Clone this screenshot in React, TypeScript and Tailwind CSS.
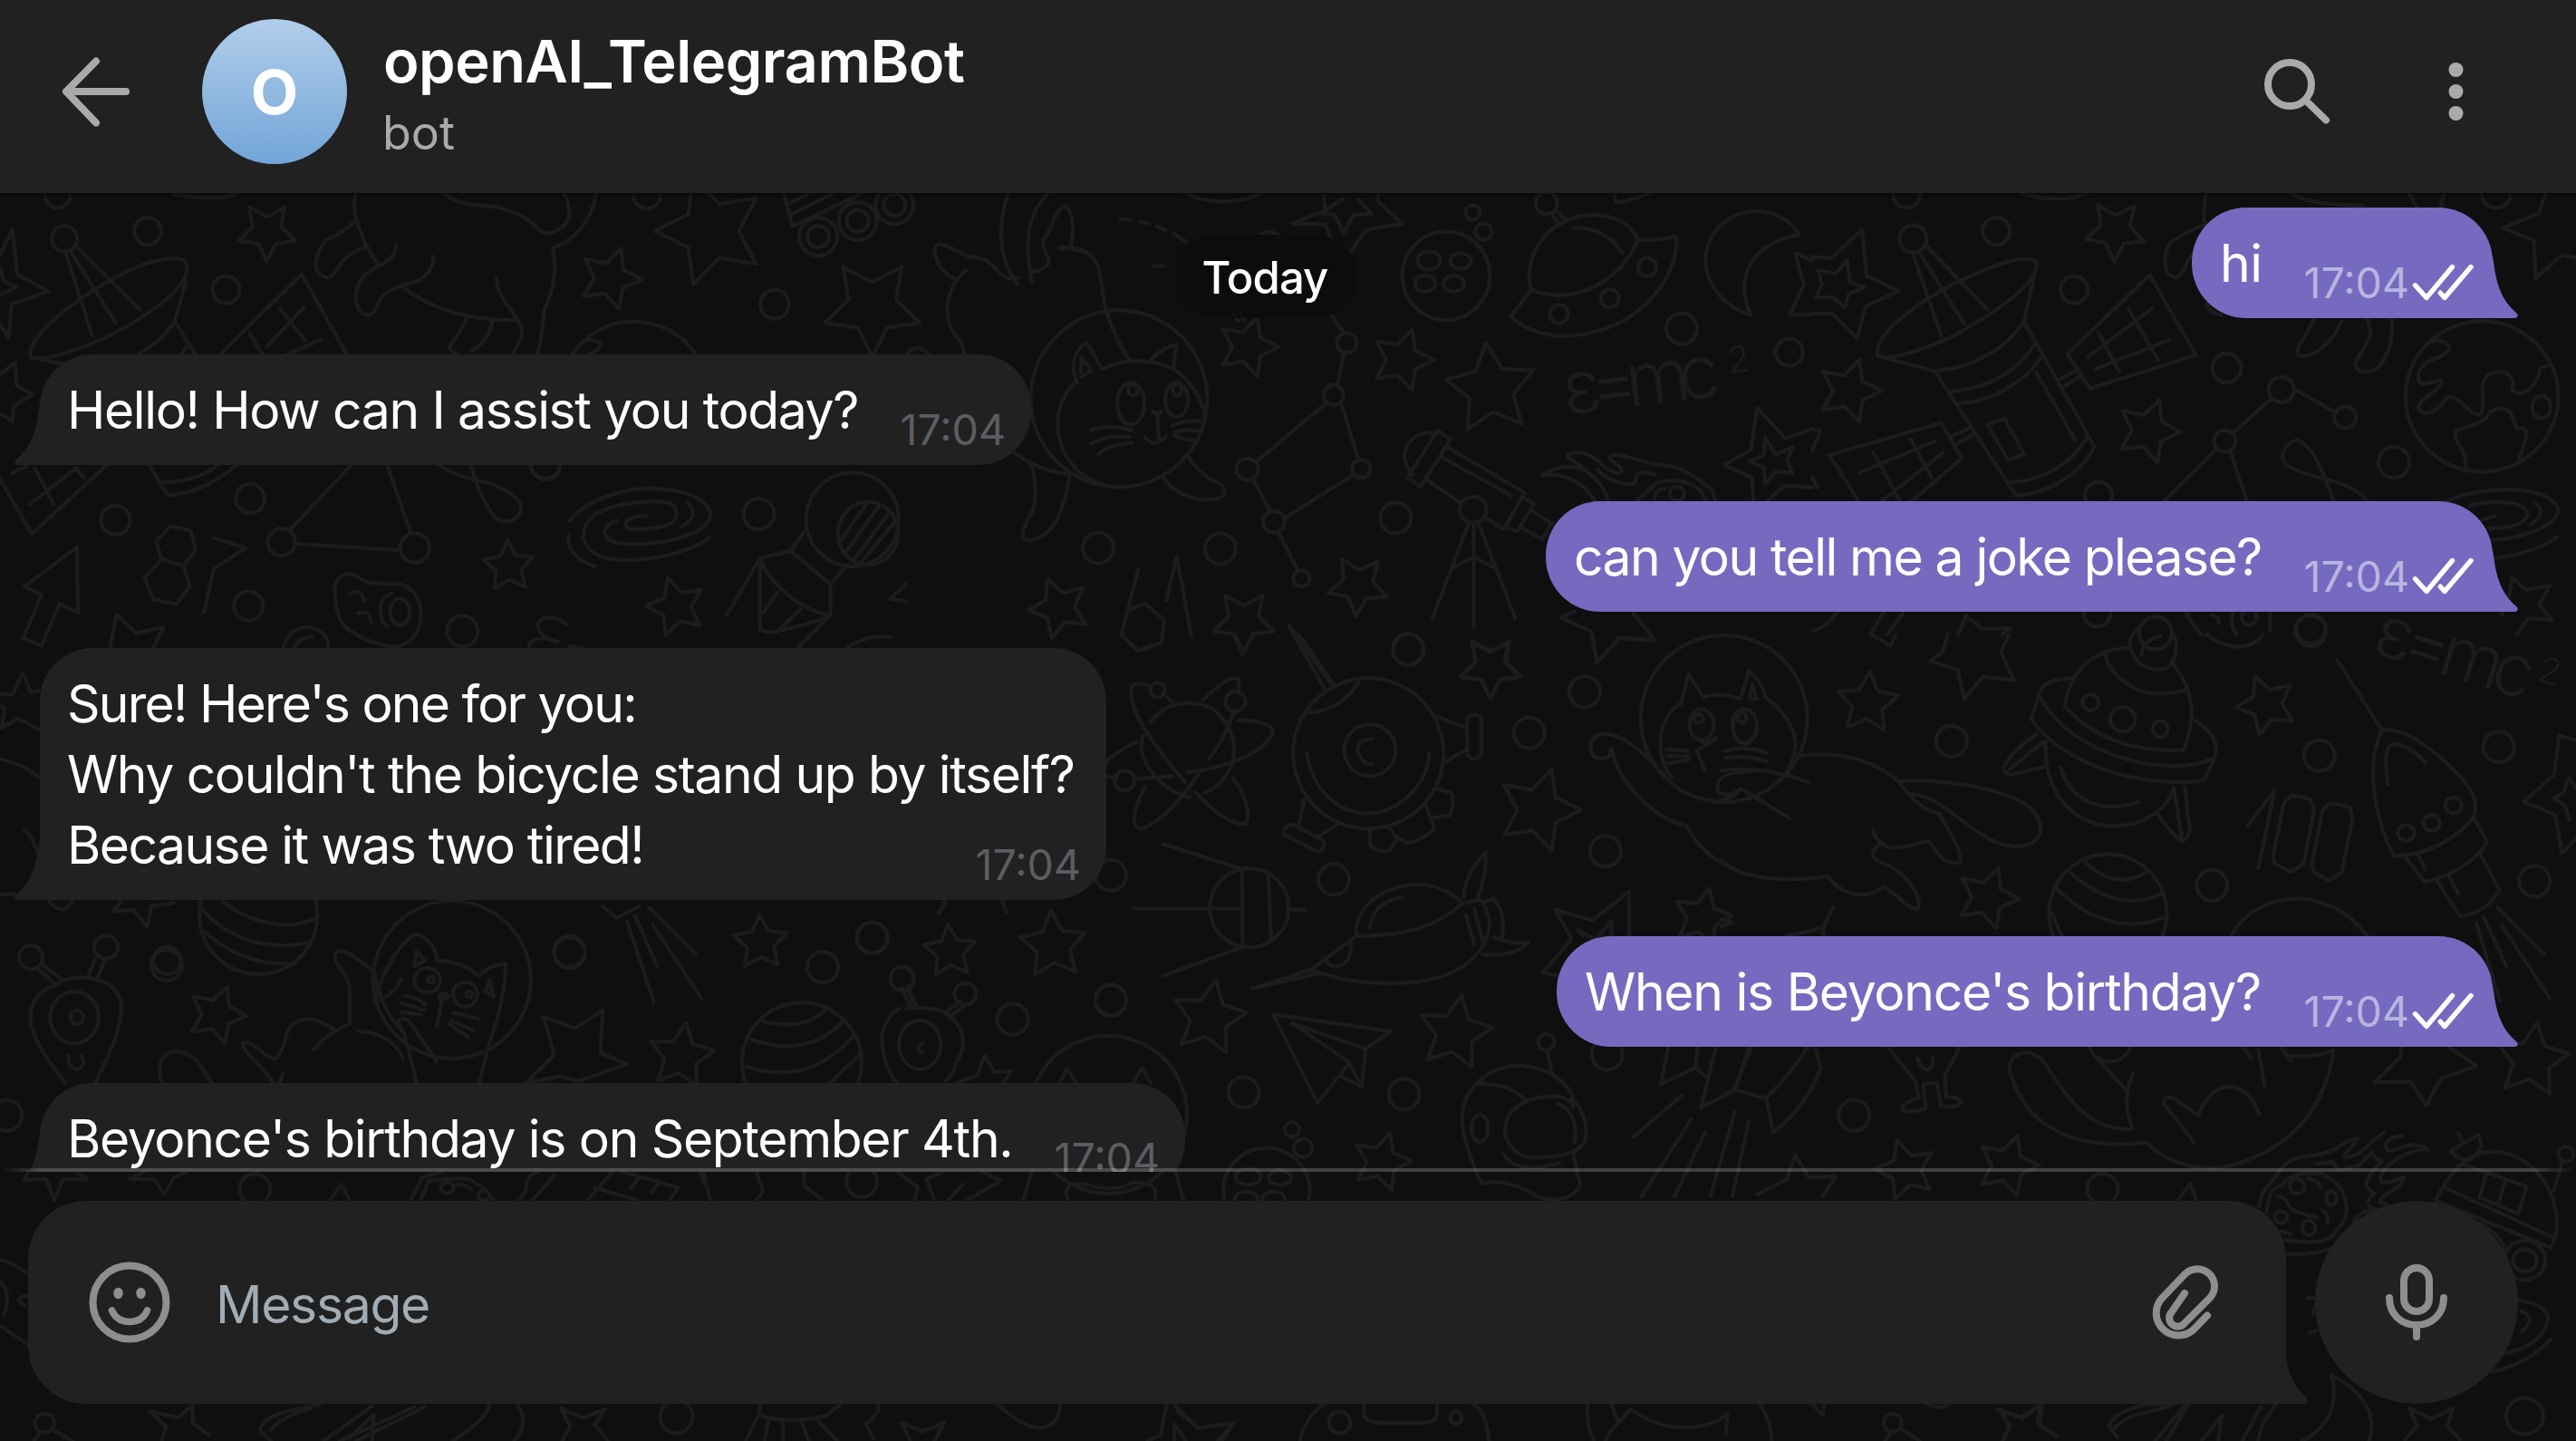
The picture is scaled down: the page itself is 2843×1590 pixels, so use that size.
import type { ReactNode } from "react";

type Star = [cx: number, cy: number, radius: number, rotation: number];
type Ellipse = [cx: number, cy: number, rx: number, ry: number];
type Ring = [cx: number, cy: number, radius: number];

interface Patch {
  ox: number;
  oy: number;
  sx: number;
  sy: number;
  lines: string[];
  stars?: Star[];
  rings?: Ring[];
  ellipses?: Ellipse[];
}

/* Space-themed wallpaper, drawn patch by patch; every patch has its own grid. */
const patches: Patch[] = [
  {
    ox: 0, oy: 0, sx: 0.7653, sy: 0.3444,
    lines: [
      "M0 815L18 735 25 880 70 933 17 975 12 1080 0 1040M0 860L5 900 24 920 0 945M0 1200L22 1162 24 1235 47 1265 20 1300 18 1350 0 1325",
      "M95 812L133 1075M103 810L167 1035M110 790L202 992M45 1145C30 1080 140 900 210 845C250 820 270 820 270 860C268 930 215 1010 150 1085C100 1130 65 1155 45 1145L95 1168M268 900L252 1030L282 1135M252 1030Q235 1090 200 1135M272 1100L262 1135",
      "M318 1135L435 878L500 1135M404 990L440 1090M438 985L385 1110M360 1068L378 1135M463 1088L415 1135",
      "M513 618Q508 690 515 700Q500 740 470 770C450 830 450 880 473 890C490 880 485 820 525 795M514 700C520 760 535 820 547 850M571 785Q570 830 547 850C505 890 505 1000 530 1010C550 1000 535 950 578 915C610 905 625 870 625 822M578 915C620 990 680 1030 748 1025M716 893C718 960 740 990 750 1040C758 1080 745 1100 740 1135M673 1018Q665 1060 650 1105Q645 1125 660 1135M710 1030Q705 1090 680 1125M860 618C855 700 830 770 797 795C805 870 795 950 785 990C782 1050 780 1100 775 1135M640 618C660 660 690 655 720 665C760 690 770 720 782 745C800 755 825 720 820 670Q820 640 812 618M250 622Q310 645 340 622",
      "M825 1135C850 1060 880 1030 912 1030C950 1030 985 1070 1003 1135M845 1090C865 1085 870 1105 862 1120L850 1135",
      "M1130 618L1143 725L1245 618M1135 655L1165 622M1138 690L1200 622",
      "M1453 618C1438 740 1440 830 1468 912M1512 618C1475 700 1480 800 1488 900M1468 890Q1450 900 1440 870C1420 820 1415 830 1395 820C1375 800 1350 760 1348 800C1350 850 1360 880 1380 895M1393 866C1360 930 1360 1030 1380 1080Q1390 1100 1390 1135M1535 660C1550 680 1548 740 1545 795M1535 660C1520 680 1515 740 1505 770C1500 800 1520 830 1510 850Q1500 870 1488 870M1528 795Q1550 795 1568 810M1310 1130Q1322 1100 1338 1130",
    ],
    stars: [[385, 742, 33, 36], [880, 892, 35, 20], [1025, 740, 62, -18], [1258, 985, 55, 36]],
    rings: [[83, 625, 14], [213, 740, 15], [93, 765, 14], [326, 928, 15], [933, 625, 15], [1117, 975, 16], [1180, 758, 21], [1180, 758, 12], [1237, 708, 21], [1237, 708, 12], [1290, 657, 21], [1290, 657, 12], [787, 1490, 16]],
  },
  {
    ox: 1100, oy: 200, sx: 0.574, sy: 0.3571,
    lines: [
      "M125 205C180 205 195 240 200 300C205 370 210 440 255 552M203 580Q270 530 340 580C380 620 400 700 400 730M152 620C100 700 110 830 160 900Q200 945 235 943M203 580C190 550 180 510 172 500C150 520 140 570 155 622M163 545L162 605L182 585ZM297 552Q320 510 347 505Q340 540 341 580",
      "M300 712Q308 722 316 712M309 720L312 800Q300 822 285 790M312 800Q322 800 326 785M183 768Q215 750 260 770M180 812Q215 780 255 790M195 843Q215 815 260 808M338 755Q365 735 390 742M342 775Q365 765 390 772M342 787Q365 800 378 800",
      "M65 875C80 930 75 1010 65 1030C45 1090 45 1110 65 1110C100 1100 130 1040 140 905M35 840Q85 900 145 905M320 915C340 960 370 985 410 985C440 980 445 960 430 935Q390 910 368 850",
      "M238 117L256 120M275 124L290 130M308 138L325 152M340 162L365 187M382 205L395 225M303 262L320 263M345 266L365 270M380 282L395 298M455 370L475 430M440 370L465 432",
      "M628 36L632 90 570 130 632 133 662 262 710 150 780 132 732 60 735 36M665 55L623 98 650 105 667 160 685 105 720 100 695 55",
      "M605 330L668 470M668 530L655 632M635 683L497 870M662 685L696 862M688 905L552 1042M493 922L527 1022M541 1083L578 1200",
      "M1568 765L1517 795 1462 700 1450 830 1398 877 1452 915 1455 988M1482 988L1515 940 1568 947M1530 822L1497 845 1478 792 1475 845 1447 866 1475 885 1478 935 1500 895 1530 903 1520 860ZM1110 1330L1085 1348 1142 1390 1155 1487 1197 1410 1265 1418 1222 1330",
      "M1028 335C1010 250 1050 110 1145 104C1200 104 1225 150 1233 178C1215 260 1160 345 1090 351Q1055 355 1028 335L988 418C1030 480 1090 490 1150 465C1240 430 1310 300 1307 170Q1270 185 1233 180M1110 145Q1170 140 1203 222M1065 98L1083 133M1075 88L1095 122M1187 36L1190 63Q1215 65 1255 36M360 36Q435 90 510 36",
      "M1543 165C1520 100 1470 85 1440 95C1380 120 1360 200 1363 260C1370 330 1400 390 1450 412C1425 330 1430 200 1543 165ZM1568 245L1535 222 1552 320 1525 412 1568 412",
      "M865 820L1015 962L975 1075L940 1040M893 995L825 920M848 770L873 798L815 943L790 915ZM845 778C800 770 780 820 785 860Q790 890 800 905M858 855L990 972M858 832L873 798M1015 980L1033 998 1000 1082 980 1070M1030 1020L1070 1060M1010 1070L1050 1108 1065 1060M908 1055L838 1350M917 1055L917 1378M926 1055L997 1350M880 1193L917 1160 955 1193",
      "M272 1200L240 1400 272 1450 317 1425 322 1355 285 1305 252 1325M326 1296L346 1160 374 1403M562 1372L630 1568M562 1372L645 1558",
      "M1050 908C1085 900 1125 920 1150 988M1050 908Q1075 880 1105 882C1130 890 1140 900 1125 885C1110 860 1090 855 1100 842C1130 830 1150 850 1170 885C1195 910 1205 905 1200 885C1180 860 1170 850 1190 845C1220 850 1240 870 1270 875C1330 880 1350 930 1375 950L1382 988M1135 897Q1170 940 1175 985M1155 890C1170 920 1200 940 1225 935C1235 910 1220 890 1265 905M1230 988L1270 930C1300 920 1330 920 1355 960L1365 988M1265 980Q1268 950 1285 950",
    ],
    stars: [[483, 512, 34, 18], [780, 552, 35, 18], [950, 642, 51, -6], [120, 1318, 34, -22], [475, 1360, 35, 36], [695, 1248, 34, 40], [950, 1500, 35, 36]],
    rings: [[235, 672, 97.5], [524, 202, 16], [673, 500, 11], [648, 660, 11], [482, 890, 12], [701, 888, 10], [533, 1052, 12], [586, 1227, 9], [195, 1133, 17], [430, 1135, 17], [767, 1040, 17], [1317, 455, 17], [1524, 528, 15], [791, 1446, 17], [915, 97, 8], [936, 156, 9], [1251, 265, 10], [1179, 362, 10], [1081, 410, 10], [1057, 68, 12]],
    ellipses: [[258, 687, 26, 65], [346, 675, 22, 54], [262, 645, 9, 18], [347, 645, 9, 18], [864, 292, 84, 137], [831, 245, 22, 28], [892, 246, 20, 24], [824, 316, 20, 25], [879, 316, 20, 25], [916, 1015, 26, 40], [1308, 965, 14, 22]],
  },
  {
    ox: 2000, oy: 0, sx: 0.5376, sy: 0.4464,
    lines: [
      "M0 635L40 638 102 567 112 682 177 720 110 757 92 835 42 775 0 775M12 668L48 677 72 643 77 698 107 710 75 727 67 760 43 735 8 735 20 703ZM0 1060L17 1065 0 1115M0 1180L10 1205M1505 478L1492 528 1418 563 1482 595 1485 688 1540 630 1568 637M1415 1520L1428 1490 1437 1428 1465 1458 1515 1447 1492 1493 1518 1532 1470 1528 1447 1568M300 1568L315 1522 350 1555 408 1552 390 1568",
      "M943 985L862 1072M990 962L1072 1018M830 1110L723 1238M858 1115L892 1238",
      "M207 627L265 830M218 620L312 800M232 605L360 765M135 880C120 820 250 720 330 680C400 640 450 630 460 650C465 700 380 770 290 830C220 870 160 890 135 880L252 917C330 910 400 860 435 795L460 660M435 795L580 1105C545 1180 480 1220 418 1225L252 917M285 968C360 960 420 920 458 850M298 997C370 995 440 940 472 880M403 1193C470 1190 530 1150 565 1080M460 920L540 1088M360 1050L395 1035L435 1122L403 1138Z",
      "M693 680L788 878 570 960 524 875ZM650 765L710 890M697 763L565 883M588 823L630 918M733 840L580 913M505 940L545 913M515 957L550 930M95 1238L35 1125 265 1045 307 1133 205 1238M98 1168L253 1090M143 1238L268 1120M125 1118L180 1238M202 1085L245 1180M285 1078L325 1058M293 1100L330 1075",
      "M808 478Q800 540 808 555Q770 570 735 600C715 640 725 690 750 685C770 670 770 630 785 625M810 750Q815 775 840 778M985 478Q1010 505 1130 508M1225 478L1242 512M1298 478L1290 512M430 478Q510 505 565 478M1030 788C1010 840 990 860 998 878C1030 890 1070 840 1087 795M1140 788L1147 825C1130 880 1100 900 1125 918C1170 930 1195 860 1190 788",
      "M1270 845Q1300 835 1308 860C1300 890 1260 880 1245 920C1240 960 1260 950 1290 938C1300 960 1240 990 1245 1010C1260 1035 1290 1010 1300 985C1330 970 1340 1020 1370 1027C1390 1000 1360 950 1390 925C1420 910 1445 925 1437 965C1460 990 1490 950 1495 910L1512 903M1340 1158C1350 1110 1310 1090 1322 1065C1350 1050 1380 1050 1390 1020C1430 990 1440 1030 1445 1060C1480 1050 1465 1090 1450 1135",
      "M1070 1238C1050 1170 1030 1100 995 1088C970 1095 955 1130 975 1150C1030 1190 1100 1180 1140 1238M1300 1240C1380 1195 1520 1200 1532 1260C1530 1300 1460 1330 1395 1335M1350 1250C1420 1230 1470 1245 1468 1275C1460 1300 1420 1305 1390 1305M1375 1285L1400 1275M1485 1245Q1510 1265 1475 1298M1400 1380Q1480 1370 1530 1327",
      "M120 1568L147 1512M155 1568L188 1512M0 1560Q30 1550 52 1512M768 1512Q775 1540 800 1568M820 1520Q835 1525 835 1540M865 1512Q855 1540 870 1568M940 1512V1560",
    ],
    stars: [[76, 966, 36, 18], [622, 570, 34, -34], [690, 1065, 36, 20]],
    rings: [[194, 480, 15], [207, 590, 15], [378, 571, 15], [538, 716, 15], [851, 910, 16], [963, 963, 14], [1094, 1032, 12], [847, 1090, 12], [1194, 1143, 17], [588, 1225, 15], [1404, 478, 16], [585, 1515, 15], [1024, 1555, 16], [705, 1565, 18]],
    ellipses: [[1375, 980, 157, 186], [1497, 1006, 19, 28], [897, 1525, 15, 20]],
  },
  {
    ox: 0, oy: 500, sx: 0.6378, sy: 0.3571,
    lines: [
      "M0 80L55 250 185 36M22 62L45 40M52 157L133 45M60 45L92 157M130 45L145 75M258 36L290 130Q350 125 410 36M278 90Q340 90 378 36",
      "M608 36L500 240M670 36L710 245M510 280L693 300M133 290L42 412 72 438 40 572 72 595 103 465 135 492ZM295 225L330 240 338 300 318 348 280 328 270 272ZM280 328L250 385 265 452 305 467 328 412 318 348M370 262L425 293 370 357 353 492M190 602L202 500 236 557 283 537 265 602M490 602Q500 540 532 537Q568 545 568 602M510 602Q515 570 540 567",
      "M580 440C575 380 600 365 615 378C630 400 640 405 690 403C720 420 730 460 728 510C725 570 700 600 680 598C640 590 600 550 590 520Q580 480 580 440ZM605 435Q625 415 630 458M620 495Q640 480 642 523M678 433C650 450 655 520 670 535",
      "M758 36C790 75 830 85 850 95C890 120 910 160 898 190C885 220 860 215 852 190C835 140 822 90 815 36",
      "M985 210C1020 130 1100 100 1150 112C1210 120 1235 170 1228 200C1215 260 1140 285 1080 280C1040 275 1035 230 1067 208M1030 350C990 330 980 280 985 252M1228 262C1180 320 1100 340 1050 325C1000 300 1000 230 1030 190C1060 155 1130 140 1160 155C1180 180 1170 215 1150 225C1120 240 1080 240 1083 220C1085 200 1105 190 1118 195M1190 155Q1212 195 1180 225",
      "M1455 270L1500 155M1462 310L1520 165M1475 335L1538 185M1487 345L1552 205M1395 235L1368 302 1315 325 1258 500M1368 302L1437 405 1467 345M1437 405V500L1380 602M1315 325V545Q1325 555 1340 552Q1400 530 1437 503C1380 480 1330 400 1315 325M1345 430L1320 495M1385 483L1345 550M1465 602Q1500 560 1540 568M1568 405L1540 450 1568 458",
      "M980 527C950 490 925 510 932 545Q940 575 965 583C930 560 915 580 915 602M985 597L1010 602M0 745L22 745 40 678 53 740 66 735M66 852L32 820 3 848 8 790 0 780M300 1390L262 1400 255 1465 232 1412 195 1415 210 1385M0 945Q40 960 66 1000M42 1165Q55 1180 66 1240M0 1365Q20 1360 25 1365M85 1385Q110 1435 125 1385",
      "M385 1385Q430 1450 490 1458Q530 1455 548 1435M350 1410C400 1510 470 1540 538 1510M355 1480Q420 1585 510 1578",
    ],
    stars: [[880, 350, 29, -3], [1170, 475, 33, -16]],
    rings: [[200, 207, 16], [433, 140, 16], [487, 275, 15], [718, 293, 16], [943, 34, 16], [1313, 188, 17], [430, 472, 16], [800, 550, 17], [289, 1568, 15], [985, 1540, 17], [1509, 1497, 17], [447, 1428, 65], [782, 1627, 87]],
    ellipses: [[692, 490, 17, 41], [1475, 205, 80, 145], [1502, 248, 52, 98]],
  },
  {
    ox: 1000, oy: 700, sx: 0.6059, sy: 0.3954,
    lines: [
      "M445 245C470 190 520 175 560 210C600 260 610 340 580 400Q565 430 545 442M517 455C470 440 430 370 428 310Q430 285 433 280M508 412C450 310 400 200 412 145Q420 130 440 143M475 175L487 192M540 183Q590 110 605 125L607 150M597 218Q580 290 552 348M605 240C660 240 670 260 668 275C650 330 590 370 512 385M418 403L485 395M420 300Q380 330 365 355M367 397L385 402M435 425C410 500 410 545 430 542C470 520 510 440 533 390M527 440C560 500 600 535 618 528C630 500 615 440 595 400",
      "M848 292Q820 295 823 330Q830 360 848 363M730 330C740 440 790 500 842 500C900 495 950 420 953 330M765 158L705 0M780 143L715 0M732 218Q790 215 825 133M960 225L1022 262M980 357L1022 320M1022 235Q1035 215 1048 235V335Q1035 360 1022 335ZM725 460L715 535M790 525L750 565M690 540Q700 525 710 535L760 575Q765 600 750 607L690 560Q685 550 690 540M845 545V590Q855 605 880 605L895 570 880 540M895 565L912 582Q950 570 962 540L945 470M965 430L993 442Q1000 470 990 505L960 512",
      "M1317 842V718L1250 798 1182 768 1212 850 1160 945 1185 952M1225 825L1255 852 1285 800V842M1225 825L1232 842M597 0L613 55 632 0M1250 0L1258 78 1300 10 1360 18M392 0L423 47 465 22 467 0M95 1250L130 1230 143 1175 160 1220 192 1220 178 1250M60 778L72 745M183 778L175 745",
      "M468 585L612 655M415 765H612M698 768H727M468 952L612 873M612 655L613 870M660 675L665 850",
      "M820 842C815 770 860 700 935 698C980 700 1010 740 1012 752C970 810 920 840 820 842L738 935C800 975 920 995 1000 940C1060 890 1080 800 1045 740L1012 752M738 935L630 988L755 945M1015 735Q1020 660 1055 610Q1060 660 1040 740M845 817Q850 750 903 733M810 855C812 900 800 935 775 925L760 905M1020 785L1035 865M1035 765L1052 862M1055 745L1070 737Q1095 780 1085 845M1070 845Q1100 865 1133 860Q1110 900 1050 893",
      "M5 990L12 1040M0 1045Q50 1035 75 1060C110 1100 110 1150 90 1200Q85 1230 70 1250M72 1055L98 1025M80 1068L105 1035M30 1140Q15 1160 30 1165",
      "M280 1252L293 1212 310 1252M413 1252L430 1210 445 1252M668 1060L882 1108 837 1157 830 1263 795 1235M668 1060L750 1307 808 1195M837 1157L703 1085 808 1195 830 1263",
      "M1048 1532Q1015 1420 1013 1360C1010 1270 1060 1205 1118 1203C1180 1210 1210 1260 1215 1300C1235 1330 1245 1380 1235 1420L1215 1450L1228 1535C1220 1568 1190 1590 1150 1568C1120 1540 1090 1520 1048 1532M1175 1220L1168 1160M1040 1255Q1100 1250 1132 1305M1187 1310Q1225 1330 1218 1418M1088 1450Q1110 1510 1190 1475M1090 1385C1095 1310 1140 1285 1190 1290Q1215 1300 1215 1320M1090 1385Q1095 1440 1130 1458Q1190 1465 1225 1435",
      "M1388 1152L1375 1255 1437 1210 1442 1152M1437 1210L1462 1240M1475 1152L1448 1320 1510 1272M1535 1152L1510 1272M1413 1287L1325 1402M1430 1353L1340 1568M1455 1390L1400 1568M1510 1330L1465 1568M1535 1360L1505 1568",
      "M1412 192L1425 110 1452 175M1412 192C1370 230 1360 330 1395 400M1452 175Q1480 160 1515 178M1475 290L1440 325 1455 380M1450 300L1470 295M1385 320L1425 325M1385 340H1425M1390 360L1425 350M1492 325Q1530 310 1568 330M1492 345Q1530 335 1568 355M1285 320C1300 420 1360 510 1422 535C1450 620 1510 670 1568 680M1283 320C1290 350 1260 355 1250 335C1240 300 1255 270 1285 280C1330 300 1360 360 1385 400M1520 430Q1500 460 1480 440C1470 400 1490 380 1568 380",
    ],
    stars: [[80, 885, 30, -4], [268, 868, 38, -4], [1152, 490, 47, 18], [1064, 92, 34, 36], [552, 1070, 42, 10], [1000, 1112, 42, 10], [866, 1472, 33, 16], [1450, 790, 33, 14]],
    rings: [[842, 332, 83], [845, 323, 28.5], [458, 155, 8], [600, 187, 11], [398, 408, 11], [625, 763, 43.6], [373, 672, 17], [779, 684, 17], [915, 43, 17], [1236, 160, 17], [1135, 275, 17], [1274, 605, 17], [373, 1020, 17], [194, 1074, 17], [615, 1278, 17], [907, 1283, 17], [1277, 1172, 17], [703, 1382, 8], [723, 1433, 10], [1166, 1137, 9], [108, 1003, 12], [368, 1340, 87], [1490, 235, 92]],
    ellipses: [[25, 1145, 38, 68], [1045, 1378, 15, 38], [1449, 252, 22, 43], [1527, 255, 22, 48], [1443, 235, 8, 12], [1522, 232, 8, 12]],
  },
  {
    ox: 1900, oy: 700, sx: 0.6014, sy: 0.3954,
    lines: [
      "M35 178L50 103Q75 130 80 175C130 230 145 300 130 350L120 385M52 180L56 140 65 180Z",
      "M140 340C220 320 290 360 325 410C345 450 365 490 400 500C420 560 445 610 437 635C410 650 395 610 380 575Q310 610 297 585Q280 570 278 545M325 410C420 400 540 440 570 490C600 540 585 590 540 592C470 590 420 460 350 445M290 585C270 610 275 630 300 640C345 670 370 740 360 765C340 770 325 725 297 705C260 745 220 725 195 675C120 690 40 690 0 630M0 380Q80 365 158 412M35 430L125 513M0 462Q25 455 35 430",
      "M275 0L310 32 320 0M415 0L405 50 383 75 433 98 445 180 480 118 537 128 513 50 527 0M1568 295L1537 282 1528 392 1472 467 1530 503 1542 612 1568 570M1568 430L1555 400 1545 440 1527 458 1548 478 1557 520M1248 1152L1245 1180 1198 1250 1265 1248 1293 1315 1320 1240 1385 1203 1335 1152M65 1563L120 1520 135 1452 160 1515 210 1512 185 1568M0 795L20 805 0 815",
      "M630 200C640 100 680 40 750 38M828 82C870 160 870 240 848 323C760 330 680 290 630 200M703 55C715 120 760 165 800 165Q830 165 855 155M643 122Q600 125 587 150L568 235C620 350 750 430 885 408L905 345C915 300 895 265 868 240M583 170C620 290 750 390 870 362L905 345M750 38C745 0 760 0 765 -20M750 38C760 90 790 105 815 95C840 70 835 20 830 0M770 58Q775 15 805 5M578 278Q530 330 517 372Q520 395 535 390L592 370M590 300L530 375M595 300C590 400 620 500 690 530C760 550 815 500 830 428M623 372C640 470 700 500 765 468M798 495Q820 550 845 577Q865 560 857 520L850 425M830 430L845 570M890 0Q920 35 955 35 985 25 993 0",
      "M965 535L1015 435 985 652M1045 450Q1060 450 1080 460L1087 490 1068 640 1045 663 1015 640 1012 620 1032 470ZM1115 473Q1135 473 1153 483L1158 515 1138 665 1115 687 1088 665 1083 645 1103 490Z",
      "M1130 72L1212 268M1212 268C1240 260 1280 290 1320 345C1360 400 1395 450 1380 510C1350 570 1290 620 1235 618C1200 530 1180 360 1212 268M1223 418C1220 380 1210 300 1240 307Q1270 320 1292 357M1380 510L1405 580C1380 640 1330 680 1290 690L1255 622M1278 612L1292 657M1393 615L1428 715Q1400 780 1355 787L1312 685M1333 670L1352 723M1385 805L1428 1022M1398 787L1440 925M1432 813L1520 1015M1425 763L1510 893",
      "M665 632Q725 720 783 660M640 665Q725 780 808 725M615 710Q710 850 813 790M605 775L625 842M935 842C960 770 1010 737 1060 737C1110 740 1155 780 1185 842M120 842Q160 830 187 815V842M187 815L205 762",
      "M55 1152L23 1270 82 1295 95 1390Q160 1310 182 1210L172 1152M158 1152Q130 1220 82 1295M23 1270L0 1290M305 1152L355 1245 362 1295Q330 1305 332 1330Q350 1335 375 1322L370 1255 395 1250 402 1315Q430 1325 440 1305Q435 1290 412 1290L410 1230 437 1152M360 1183Q365 1215 378 1215Q390 1210 387 1178M675 1152C690 1210 740 1200 750 1152M530 1225C520 1180 560 1140 590 1190C630 1280 670 1390 755 1380C735 1310 745 1260 755 1225M530 1225C560 1380 650 1440 780 1418C820 1480 880 1500 930 1485C1060 1430 1110 1300 1123 1160M690 1185L742 1270M868 1420L812 1310Q810 1285 830 1295L875 1343C900 1240 960 1230 987 1340M985 1160L997 1260M957 1152L972 1183M1028 1155L1045 1190M1038 1175Q1080 1185 1123 1160",
    ],
    stars: [[268, 192, 35, 4], [1000, 197, 34, -22], [488, 735, 35, 20], [1487, 1188, 42, 8], [338, 1495, 34, -16], [525, 1482, 35, 18]],
    rings: [[422, 298, 17], [1097, 338, 17], [1426, 314, 17], [900, 700, 17], [1492, 689, 17], [243, 1342, 17], [699, 1548, 17], [1081, -10, 17], [709, 778, 65]],
    ellipses: [[43, 257, 22, 48], [38, 232, 8, 14], [677, 190, 15, 22], [736, 237, 23, 34], [805, 264, 14, 22], [1256, 554, 15, 22], [1303, 526, 15, 22], [1343, 477, 15, 22]],
  },
  {
    ox: 0, oy: 1000, sx: 0.8929, sy: 0.3763,
    lines: [
      "M68 232C45 250 35 290 38 340C45 420 70 480 80 518M68 228L45 180M78 218L52 170M108 210L118 152M120 212L130 155M150 290C148 240 130 210 100 208Q80 210 68 232M150 290C150 380 130 450 118 518M85 437Q82 475 97 478Q108 460 100 437",
      "M650 518L685 435 672 325 710 358 745 305 742 430 775 463 715 513 693 498 650 518M35 779L30 802 57 800 67 862 78 800 107 800 95 779M178 779L160 800 190 800 203 845 215 795 230 779",
      "M540 455L505 335C490 320 490 340 500 375L515 518M463 280C470 200 500 80 517 82C535 100 540 140 540 160C570 160 585 190 592 205C600 180 615 170 625 168C625 220 620 300 605 400L592 518M470 275Q490 250 495 215M515 130L512 175 525 160ZM605 215L600 250 610 265ZM547 265L540 350M500 262Q520 270 525 290M497 285L525 305M497 310L520 318M560 312L592 330M558 335L585 365M555 345L578 382M463 195C440 150 425 120 415 135C410 170 432 200 432 240V345C400 380 395 400 388 420M412 360C390 320 365 320 355 370C350 420 345 440 340 448C325 440 310 390 300 400C300 430 330 480 338 518M350 490L345 518M443 365C470 370 490 400 498 445M463 195Q470 300 500 375M200 518C190 440 210 420 225 427C245 440 250 480 262 518",
      "M775 45L808 280M785 28L812 175M807 55L867 270M803 5L860 140M745 0L762 35 790 0M940 335Q990 370 1020 305M928 390Q1000 450 1045 330M922 470Q1000 530 1055 380M1025 518L1063 435",
      "M1112 300Q1095 320 1090 380Q1090 460 1108 518M1125 298L1115 240M1133 295L1122 235",
      "M508 860L522 795 545 779M520 862L530 805Q560 795 580 800L600 830 610 860M665 779C640 800 660 830 640 862M685 790L658 862M565 815Q580 820 582 830M727 860L757 779M735 825L785 860M770 779L838 825 828 862M790 795L780 825M815 810L805 838M870 779L878 862M865 779L872 820M935 779L943 835 935 862M993 779L995 822 1018 862M1110 779L1135 825 1130 862M1215 779L1237 805 1195 862M1165 779L1145 800 1155 862M1190 815L1172 862M1275 779L1265 862M1320 862C1310 810 1335 808 1345 818Q1380 840 1400 810C1430 810 1430 830 1427 862M1453 779L1463 862M408 862L422 815 432 862",
      "M0 1035Q20 1050 35 1080M0 1100Q15 1130 5 1200M35 1140Q15 1150 30 1170M0 1230L35 1285",
      "M65 1535L90 1568M50 1540L42 1568M185 1480L220 1500 238 1462V1515L258 1550M185 1480L205 1525 200 1568M395 1462C340 1480 320 1510 322 1540L335 1568M385 1470Q345 1500 335 1535M460 1465L400 1568M512 1468L420 1568M525 1468L440 1568M462 1490L432 1560M462 1490L460 1568M605 1462C600 1510 570 1550 560 1568M640 1462Q655 1520 635 1568M693 1472L720 1500 748 1475 735 1520 752 1568M693 1472L705 1525 695 1568M940 1462L938 1490Q970 1520 1020 1495L1038 1462M938 1490L922 1568M950 1510L945 1568M968 1510V1568M990 1510L1000 1568M1010 1505L1035 1568M1085 1462Q1090 1480 1070 1520L1080 1560M1115 1515L1140 1540 1167 1515 1155 1568M1115 1515L1125 1568M1232 1459Q1265 1530 1285 1530 1310 1525 1310 1459M1510 1568L1525 1515 1482 1530 1455 1480",
    ],
    stars: [[268, 318, 33, 20], [940, 107, 31, -2], [842, 440, 37, 8]],
    rings: [[38, 150, 13], [131, 120, 13], [206, 173, 17], [704, 136, 17], [1017, 179, 17], [1078, 93, 17], [1373, 276, 17], [1115, 212, 13], [8, 613, 17], [315, 830, 17], [1065, 808, 17], [836, 1497, 18], [991, 458, 66]],
    ellipses: [[92, 326, 30, 76], [95, 325, 8, 20], [528, 217, 16, 36], [575, 258, 15, 36], [533, 215, 4, 9], [580, 258, 4, 9], [548, 264, 6, 8], [553, 825, 8, 16], [598, 848, 7, 14], [55, 1515, 12, 28]],
  },
  {
    ox: 2200, oy: 1250, sx: 0.4101, sy: 0.3333,
    lines: [
      "M715 245C725 170 740 190 770 125C800 70 860 80 880 70C930 60 960 10 980 20C960 60 940 70 945 80C990 80 1010 30 1050 0M1100 10C1060 10 1040 50 1070 60C1110 40 1140 30 1170 55C1080 60 1030 140 1045 165C1080 165 1090 150 1105 148C1090 200 1040 200 1040 230L1060 238M870 102Q890 102 915 95C920 130 940 125 955 115C990 120 1000 80 1020 65Q1025 85 1045 95C1000 150 990 180 1025 200C1000 230 1005 240 1025 252C990 260 975 280 970 295M735 262C745 200 740 190 775 175C800 130 850 130 885 135C930 170 945 190 950 240C955 290 930 310 910 345C880 370 820 360 785 355M765 210Q790 215 800 250Q830 270 870 280M845 152Q875 155 880 180M885 255Q905 275 898 297M785 400Q850 410 915 380M775 325L800 335",
      "M1190 225C1230 120 1280 62 1345 62C1430 65 1500 150 1515 270C1520 330 1510 350 1500 380L1190 225M1215 182L1505 345M1265 105L1435 178 1412 268 1310 215M1325 140L1308 215M1378 158L1358 238M1230 60L1305 8C1320 40 1310 70 1280 90Q1250 90 1230 60M1250 0L1268 35M1508 190L1530 100M1310 300Q1370 340 1378 395",
      "M1411 555C1470 560 1495 590 1492 620C1480 690 1420 720 1375 730M1420 590Q1465 610 1422 658M1500 685Q1430 770 1340 790M845 545L870 550M850 662L868 655M870 558L860 600M495 225L530 168 547 225",
      "M10 915L78 945 130 900 125 970 172 1005M20 920L45 972 25 1020M460 897Q340 900 310 970L335 1010M490 897C390 940 370 920 320 985M520 897L435 1020M525 897L465 1020M560 1020L615 935 605 1020M720 905L670 1020M760 900Q720 960 712 1020M830 1020C900 980 930 900 910 803C980 840 1040 930 1010 1020M1108 1015L1140 970 1120 912 1178 948 1237 912 1222 972 1255 1015",
    ],
    ellipses: [[817, 177, 20, 24], [910, 216, 14, 22], [774, 279, 17, 20], [849, 314, 18, 24], [1541, 70, 20, 25], [1430, 422, 55, 65], [1430, 422, 32, 37], [1430, 938, 50, 60]],
  },
  {
    ox: 1200, oy: 1100, sx: 0.7015, sy: 0.3333,
    lines: [
      "M125 1347L115 1450 95 1470M137 1350L173 1427 230 1410 205 1470M137 1470V1415L155 1470M373 1347Q340 1400 335 1470M435 1347V1385Q440 1410 460 1410H530Q550 1405 550 1380V1347M605 1347L615 1360Q630 1400 632 1470M787 1347Q785 1420 797 1470M825 1347L835 1410 855 1365Q895 1425 940 1425T1007 1380L1005 1445M815 1470Q820 1440 835 1410M1058 1347Q1075 1400 1077 1470M1140 1347L1157 1385 1160 1347M1280 1430L1310 1470M1265 1442L1255 1470M1440 1470L1450 1425 1437 1367 1468 1392 1500 1352 1495 1410 1525 1455M1320 1347Q1340 1370 1355 1347",
    ],
    ellipses: [[282, 640, 68, 140], [253, 595, 20, 27], [303, 598, 18, 24], [250, 668, 18, 24], [293, 668, 18, 24], [397, 1409, 17, 36], [580, 1393, 9, 20], [1267, 1410, 14, 30]],
  },
];

function starPoints(cx: number, cy: number, radius: number, rotation: number) {
  return Array.from({ length: 10 }, (_, i) => {
    const r = i % 2 ? radius * 0.5 : radius;
    const a = ((rotation + i * 36) * Math.PI) / 180;
    return `${(cx + r * Math.sin(a)).toFixed(1)},${(cy - r * Math.cos(a)).toFixed(1)}`;
  }).join(" ");
}

function Wallpaper() {
  return (
    <svg
      className="pointer-events-none absolute inset-0"
      width="2843"
      height="1590"
      viewBox="0 0 2843 1590"
      fill="none"
      stroke="#1c1c1e"
      strokeWidth="4.2"
      strokeLinecap="round"
      strokeLinejoin="round"
      aria-hidden="true"
    >
      {patches.map((p) => (
        <g key={`${p.ox}-${p.oy}`}>
          <g transform={`translate(${p.ox} ${p.oy}) scale(${p.sx} ${p.sy})`}>
            {p.lines.map((d) => (
              <path key={d} d={d} vectorEffect="non-scaling-stroke" />
            ))}
            {p.ellipses?.map(([cx, cy, rx, ry]) => (
              <ellipse key={`${cx}-${cy}-${rx}`} cx={cx} cy={cy} rx={rx} ry={ry} vectorEffect="non-scaling-stroke" />
            ))}
          </g>
          {p.rings?.map(([cx, cy, r]) => (
            <circle key={`${cx}-${cy}-${r}`} cx={p.ox + cx * p.sx} cy={p.oy + cy * p.sy} r={r} />
          ))}
          {p.stars?.map(([cx, cy, r, rot]) => (
            <polygon key={`${cx}-${cy}`} points={starPoints(p.ox + cx * p.sx, p.oy + cy * p.sy, r, rot)} />
          ))}
        </g>
      ))}
      <g fill="#1c1c1e" stroke="none" fontFamily="Inter, sans-serif" fontWeight="300">
        <text transform="translate(1728 458) rotate(-7)" fontSize="82" textLength="174">ε=mc</text>
        <text transform="translate(1908 412) rotate(-7)" fontSize="40">2</text>
        <text transform="translate(2616 720) rotate(17)" fontSize="80" textLength="180">ε=mc</text>
        <text transform="translate(2798 750) rotate(17)" fontSize="40">2</text>
      </g>
    </svg>
  );
}

function Ticks() {
  return (
    <svg className="ml-[2px] block" width="70" height="44" viewBox="0 0 70 44" fill="none" stroke="#fff" strokeWidth="5.4" strokeLinecap="round" strokeLinejoin="round" aria-hidden="true">
      <path d="M4.500 23.800L17 37.500L45.500 3.500" />
      <path d="M32.300 32.200L37 37.500L66 3.500" />
    </svg>
  );
}

function Tail({ side }: { side: "left" | "right" }) {
  const shape = <path d="M0 0H1C3 12 4 23 8 34C13 48 20 56 28 63Q30 67 26 68H0Z" />;
  return side === "right" ? (
    <svg className="absolute bottom-0 left-full -ml-px fill-[#756abf]" width="31" height="68" viewBox="0 0 31 68" aria-hidden="true">
      {shape}
    </svg>
  ) : (
    <svg className="absolute right-full bottom-0 -mr-px -scale-x-100 fill-[#212121]" width="31" height="68" viewBox="0 0 31 68" aria-hidden="true">
      {shape}
    </svg>
  );
}

function Incoming({ width, children }: { width: string; children: ReactNode }) {
  return (
    <div className={`relative ml-[44px] flex items-end justify-between self-start rounded-[58px] rounded-bl-none bg-[#212121] pt-[23px] pr-[28px] pb-[21px] pl-[30px] ${width}`}>
      <Tail side="left" />
      <p className="text-[57px] leading-[78px] whitespace-pre text-white">{children}</p>
      <time className="-mb-[5px] text-[46.5px] leading-none text-[#5c5d62]">17:04</time>
    </div>
  );
}

function Outgoing({ width, children }: { width: string; children: ReactNode }) {
  return (
    <div className={`relative mr-[92px] flex items-end justify-between self-end rounded-[60px] rounded-br-none bg-[#756abf] pt-[23px] pr-[20px] pb-[21px] pl-[31px] ${width}`}>
      <Tail side="right" />
      <p className="text-[57px] leading-[78px] whitespace-pre text-white">{children}</p>
      <div className="-mb-[5px] flex items-end">
        <time className="text-[46.5px] leading-none text-[#bab5e0]">17:04</time>
        <Ticks />
      </div>
    </div>
  );
}

function Header() {
  return (
    <header className="relative flex h-[213px] shrink-0 items-start bg-[#212121] shadow-[0_2px_6px_rgba(0,0,0,0.55)]">
      <button className="mt-[57px] ml-[60px]" aria-label="Back">
        <svg width="88" height="88" viewBox="0 0 88 88" fill="none" stroke="#aaaaaa" strokeWidth="8" strokeLinecap="round" strokeLinejoin="round">
          <path d="M46 10.500L13 44L46 78.500M13 44H79" />
        </svg>
      </button>
      <div className="mt-[21px] ml-[75px] flex size-[160px] items-center justify-center rounded-full bg-linear-to-b from-[#b1cde9] to-[#72a5d8] text-[68px] leading-none font-bold text-white">
        O
      </div>
      <div className="mt-[26px] ml-[40px] flex flex-col">
        <h1 className="text-[65px] leading-[84px] font-semibold tracking-[-0.48px] text-white">openAI_TelegramBot</h1>
        <span className="mt-[3px] -ml-[1px] text-[52px] leading-[68px] text-[#aaaaaa]">bot</span>
      </div>
      <button className="mt-[59px] ml-auto" aria-label="Search">
        <svg width="84" height="84" viewBox="0 0 84 84" fill="none" stroke="#aaaaaa" strokeWidth="8" strokeLinecap="round">
          <circle cx="33" cy="34" r="24" />
          <path d="M51 52L73 73.500" />
        </svg>
      </button>
      <button className="mt-[59px] mr-[92px] ml-[92px]" aria-label="More actions">
        <svg width="81" height="84" viewBox="0 0 81 84" fill="#aaaaaa">
          <circle cx="40.500" cy="18" r="8" />
          <circle cx="40.500" cy="42" r="8" />
          <circle cx="40.500" cy="66" r="8" />
        </svg>
      </button>
    </header>
  );
}

function Composer() {
  return (
    <footer className="relative flex h-[224px] shrink-0 items-stretch gap-[32px] pr-[64px] pl-[31px]">
      <div className="relative flex flex-1 items-center rounded-[64px] rounded-br-none bg-[#212121]">
        <svg className="ml-[64px]" width="96" height="96" viewBox="0 0 96 96" fill="none" aria-hidden="true">
          <circle cx="48" cy="48" r="40.500" stroke="#8e8e8e" strokeWidth="8" />
          <ellipse cx="35.500" cy="38" rx="5.200" ry="6.200" fill="#8e8e8e" />
          <ellipse cx="60.500" cy="38" rx="5.200" ry="6.200" fill="#8e8e8e" />
          <path d="M28.500 57Q34 69.500 48 69.500T67.500 57" stroke="#8e8e8e" strokeWidth="7.500" strokeLinecap="round" />
        </svg>
        <span className="mt-[4px] ml-[47px] text-[57px] leading-none tracking-[-1.3px] text-[#a2acb4]">Message</span>
        {/* Paper clip: outer loop, then the inner hook */}
        <svg className="mr-[73px] ml-auto" width="84" height="92" viewBox="0 0 84 92" fill="none" stroke="#8e8e8e" strokeWidth="8" strokeLinecap="round" strokeLinejoin="round" aria-hidden="true">
          <path d="M70 60.500L55 76A24.600 24.600 0 0 1 20 41.500L46 14.300A19 19 0 0 1 73 41L44.500 69.500A8.500 8.500 0 0 1 30.500 57L45 36" />
        </svg>
        <svg className="absolute bottom-0 left-full -ml-px fill-[#212121]" width="26" height="60" viewBox="0 0 26 60" aria-hidden="true">
          <path d="M0 0H1C1 24 9 39 23 53Q27 60 21 60H0Z" />
        </svg>
      </div>
      <button className="flex w-[224px] items-center justify-center rounded-full bg-[#212121]" aria-label="Record voice message">
        <svg width="84" height="96" viewBox="0 0 84 96" fill="none" stroke="#8e8e8e" strokeWidth="8" strokeLinecap="round">
          <rect x="28" y="10" width="28" height="48" rx="14" />
          <path d="M12 43C12 61 25 73 42 73S72 61 72 43M42 73V86" />
        </svg>
      </button>
    </footer>
  );
}

export default function App() {
  return (
    <div className="relative flex h-[1590px] w-[2843px] flex-col overflow-hidden bg-[#0f0f0f] font-['Inter',sans-serif]">
      <Wallpaper />
      <Header />
      <main className="relative flex h-[1080px] shrink-0 flex-col gap-[40px] overflow-hidden pt-[16px]">
        <div className="absolute top-[46px] left-[1296px] flex h-[92px] w-[202px] items-center justify-center rounded-[46px] bg-[#0c0c0c]/85 pt-[4px] pr-[2px] text-[49px] font-medium tracking-[-0.9px] text-white">
          Today
        </div>
        <Outgoing width="w-[332px]">
          <span className="tracking-[-0.5px]">hi</span>
        </Outgoing>
        <Incoming width="w-[1094px]">
          <span className="tracking-[-1.36px]">Hello! How can I assist you today?</span>
        </Incoming>
        <Outgoing width="w-[1045px]">
          <span className="tracking-[-1.58px]">can you tell me a joke please?</span>
        </Outgoing>
        <Incoming width="w-[1177px]">
          <span className="mr-[-200px] block tracking-[-1.75px]">Sure! Here's one for you:</span>
          <span className="mr-[-200px] block tracking-[-1.36px]">Why couldn't the bicycle stand up by itself?</span>
          <span className="mr-[-200px] block tracking-[-1.55px]">Because it was two tired!</span>
        </Incoming>
        <Outgoing width="w-[1033px]">
          <span className="tracking-[-1.25px]">When is Beyonce's birthday?</span>
        </Outgoing>
        <Incoming width="w-[1264px]">
          <span className="tracking-[-1.32px]">Beyonce's birthday is on September 4th.</span>
        </Incoming>
        <div className="absolute inset-x-0 bottom-0 flex h-[4px]">
          <div className="w-[50px] bg-linear-to-r from-transparent to-white/20" />
          <div className="flex-1 bg-white/20" />
          <div className="w-[50px] bg-linear-to-r from-white/20 to-transparent" />
        </div>
      </main>
      <div className="h-[32px] shrink-0" />
      <Composer />
    </div>
  );
}
